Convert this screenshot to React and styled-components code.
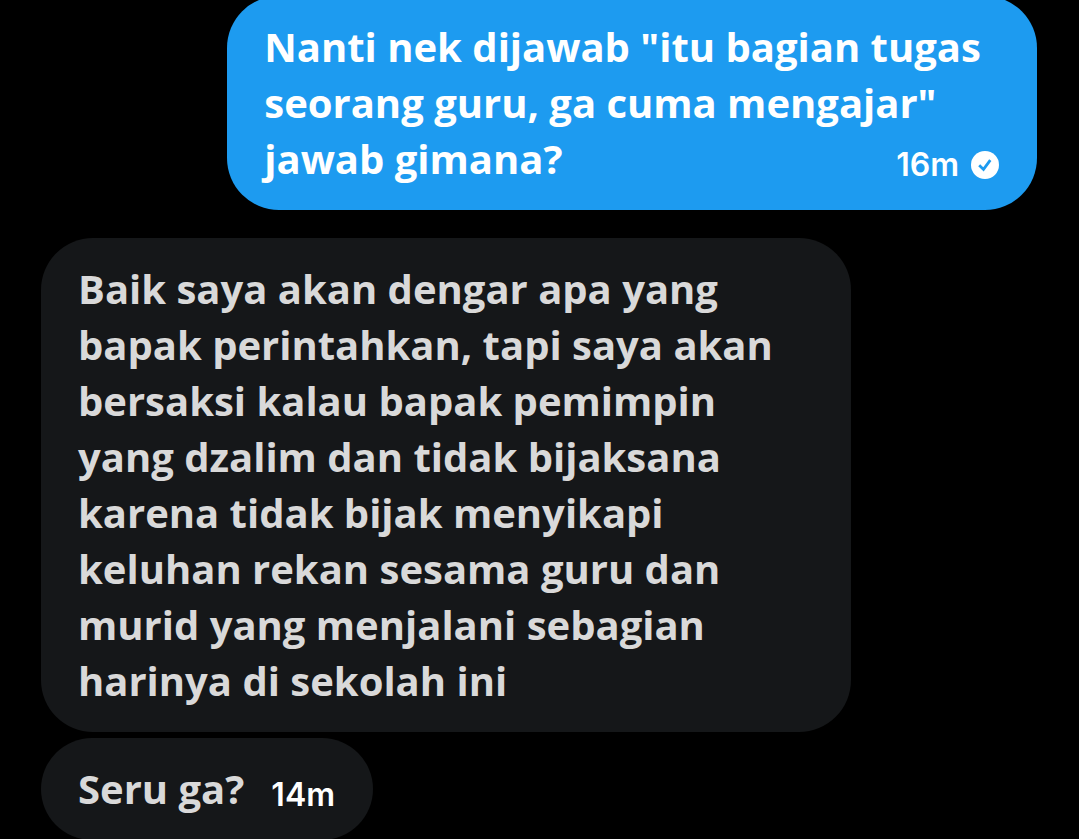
import React from "react";
import styled, { createGlobalStyle } from "styled-components";

const messages = [
  {
    id: 1,
    own: true,
    text: 'Nanti nek dijawab "itu bagian tugas seorang guru, ga cuma mengajar" jawab gimana?',
    time: "16m",
  },
  {
    id: 2,
    text: "Baik saya akan dengar apa yang bapak perintahkan, tapi saya akan bersaksi kalau bapak pemimpin yang dzalim dan tidak bijaksana karena tidak bijak menyikapi keluhan rekan sesama guru dan murid yang menjalani sebagian harinya di sekolah ini",
  },
  { id: 3, text: "Seru ga?", time: "14m", short: true },
];

function App() {
  return (
    <>
      <GlobalStyle />
      <Conversation>
        {messages.map((item) => (
          <Bubble key={item.id} $own={item.own} $short={item.short}>
            {item.text}
            {item.time && (
              <Meta>
                <time>{item.time}</time>
                {item.own && <SentIcon />}
              </Meta>
            )}
          </Bubble>
        ))}
      </Conversation>
    </>
  );
}

function SentIcon() {
  return (
    <svg width="28" height="28" viewBox="0 0 28 28" role="img" aria-label="Sent">
      <circle cx="14" cy="14" r="14" fill="#fff" />
      <path d="M8.2 14.2l4.3 4.2 6.8-9.2" fill="none" stroke="#1d9bf0" strokeWidth="2.8" />
    </svg>
  );
}

const GlobalStyle = createGlobalStyle`
  body {
    margin: 0;
    background: #000;
    overflow-x: hidden;
  }
`;

const Conversation = styled.main`
  display: flex;
  flex-direction: column;
  align-items: flex-start;
  gap: 6px;
  margin-top: -4px;
  padding: 0 42px 0 41px;
  font-family: "Open Sans", "Liberation Sans", sans-serif;
`;

const Bubble = styled.article`
  box-sizing: border-box;
  width: ${(props) => (props.$short ? "auto" : "81.3%")};
  align-self: ${(props) => (props.$own ? "flex-end" : "flex-start")};
  margin-bottom: ${(props) => (props.$own ? "22px" : "0")};
  padding: 23px 38px 23px 37px;
  border-radius: 52px;
  background: ${(props) => (props.$own ? "#1d9bf0" : "#151719")};
  color: ${(props) => (props.$own ? "#fff" : "#d9d9d9")};
  font-size: 40px;
  font-weight: 700;
  line-height: 56px;
`;

/* floats to the end of the last line of the message */
const Meta = styled.span`
  float: right;
  display: flex;
  align-items: center;
  gap: 12px;
  margin-left: 27px;
  padding-top: 12px;
  color: #fff;
  font-family: Inter, "Liberation Sans", sans-serif;
  font-size: 32px;
  font-weight: 600;
  line-height: 44px;
`;

export default App;
